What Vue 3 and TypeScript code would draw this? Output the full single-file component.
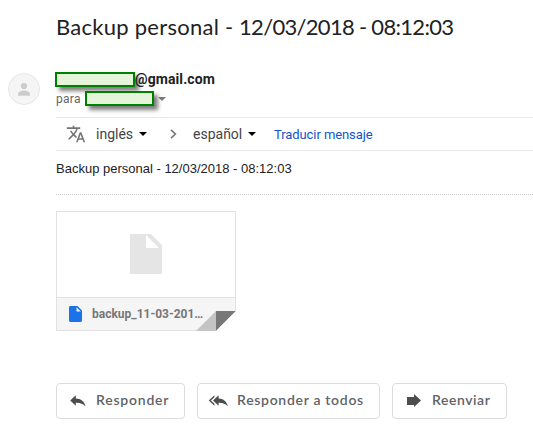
<script setup lang="ts">
interface Action {
  id: string
  label: string
  icon: string
}

const title = 'Backup personal -'
const stamp = '12/03/2018 - 08:12:03'
const actions: Action[] = [
  { id: 'reply', label: 'Responder', icon: 'M6.8 2.2V5.4C12 5.6 15.4 8.2 16.6 13.6C14.2 10.6 11.2 9.6 6.8 9.7V12.8L1.2 7.5Z' },
  { id: 'all', label: 'Responder a todos', icon: 'M10.6 2.2V5.4C15.4 5.6 18.8 8.2 20 13.6C17.6 10.6 14.8 9.6 10.6 9.7V12.8L5 7.5ZM6.4 2.2V4.2L2.9 7.5L6.4 10.8V12.8L.8 7.5Z' },
  { id: 'forward', label: 'Reenviar', icon: 'M1 4H8V1L15 7.5L8 14V12H1Z' },
]
</script>

<template>
  <main class="mail">
    <h1 class="subject"><span class="title">{{ title }}</span> <span class="stamp">{{ stamp }}</span></h1>
    <header class="sender">
      <svg class="avatar" viewBox="0 0 32 32">
        <circle cx="16" cy="16" r="15.5" fill="#f5f5f5" stroke="#e6e6e6" />
        <circle cx="16" cy="13" r="3.1" fill="#ccc" />
        <path d="M10 22.8V20.8C10 18.5 14 17.5 16 17.5S22 18.5 22 20.8V22.8Z" fill="#ccc" />
      </svg>
      <div class="people">
        <div class="from"><span class="mask mask-from"></span><b class="domain">@gmail.com</b></div>
        <div class="to">
          <span class="para">para</span><span class="mask mask-to"></span>
          <svg class="to-arrow" viewBox="0 0 8 4"><path d="M0 0H8L4 4Z" fill="#777" /></svg>
        </div>
      </div>
    </header>
    <section class="content">
      <div class="translate">
        <svg class="glyph" viewBox="0 0 24 24"><path fill="#757575" d="M12.87 15.07l-2.54-2.51.03-.03A17.52 17.52 0 0014.07 6H17V4h-7V2H8v2H1v2h11.17C11.5 7.92 10.44 9.75 9 11.35 8.07 10.32 7.3 9.19 6.69 8h-2c.73 1.63 1.73 3.17 2.98 4.56l-5.09 5.02L4 19l5-5 3.11 3.11.76-2.04zM18.5 10h-2L12 22h2l1.12-3h4.75L21 22h2l-4.5-12zm-2.62 7l1.62-4.33L19.12 17h-3.24z" /></svg>
        <span class="lang source">inglés</span>
        <svg class="caret" viewBox="0 0 8 4"><path d="M0 0H8L4 4Z" /></svg>
        <svg class="chevron" viewBox="0 0 7 10"><path d="M1 .8L5.4 5L1 9.2" fill="none" stroke="#777" stroke-width="1.6" /></svg>
        <span class="lang target">español</span>
        <svg class="caret" viewBox="0 0 8 4"><path d="M0 0H8L4 4Z" /></svg>
        <a class="link">Traducir mensaje</a>
      </div>
      <p class="body">{{ title }} {{ stamp }}</p>
      <div class="divider"></div>
      <article class="file">
        <div class="preview">
          <svg class="big-doc" viewBox="0 0 32 40"><path fill="#e5e5e5" fill-rule="evenodd" d="M0 0H21L32 11V40H0ZM16 1V14H29Z" /></svg>
        </div>
        <div class="caption">
          <svg class="doc" viewBox="0 0 13 16"><path fill="#1a73e8" fill-rule="evenodd" d="M1.4 0H8.5L13 4.5V14.6Q13 16 11.6 16H1.4Q0 16 0 14.6V1.4Q0 0 1.4 0ZM7.5 1.2V5.5H11.8Z" /></svg>
          <span class="name">backup_11-03-201…</span>
        </div>
        <svg class="fold" viewBox="0 0 40 20"><path d="M0 20L20 0V20Z" fill="#c4c4c4" /><path d="M20 0H40L20 20Z" fill="#777" /><path d="M40 0V20H20Z" fill="#fff" /></svg>
      </article>
      <nav class="actions">
        <button v-for="action in actions" :key="action.id" class="action" :class="action.id">
          <svg class="action-icon" viewBox="0 0 21 16"><path :d="action.icon" fill="#4d4d4d" /></svg>
          <span class="label">{{ action.label }}</span>
        </button>
      </nav>
    </section>
  </main>
</template>

<style>
body { margin: 0; background: #fff; overflow: hidden; }
</style>

<style scoped>
* { box-sizing: border-box; }
svg { display: block; flex: none; }
.mail { width: 533px; height: 439px; overflow: hidden; background: #fff; font-family: Roboto, "Liberation Sans", sans-serif; color: #202124; }
.subject { margin: 0; padding: 13px 0 0 56px; height: 71px; font: 400 22px/28px Lato, sans-serif; white-space: nowrap; }
.title { letter-spacing: .26px; }
.stamp { letter-spacing: -.7px; }
.sender { display: flex; height: 46px; padding-left: 8px; }
.avatar { width: 32px; height: 32px; margin-top: 2px; }
.people { margin-left: 15px; }
.from { display: flex; height: 20px; padding-top: 1px; }
.mask { flex: none; height: 15px; border: 2px solid #008000; background: #e5f5d9; box-shadow: 4px 4px 4px rgba(0, 0, 0, .5); }
.mask-from { width: 80px; }
.domain { margin-top: -1px; font-size: 14px; line-height: 16px; letter-spacing: .1px; }
.to { display: flex; height: 16px; }
.para { width: 29px; margin-left: 1px; font-size: 12px; line-height: 16px; color: #666; letter-spacing: .3px; }
.mask-to { width: 69px; }
.to-arrow { width: 8px; height: 4px; margin: 6px 0 0 4px; }
.content { margin-left: 56px; }
.translate { display: flex; align-items: center; height: 34px; border-top: 1px solid #e8e8e8; border-bottom: 1px solid #e8e8e8; padding-left: 10px; }
.glyph { width: 20px; height: 20px; }
.lang { font-size: 14px; line-height: 18px; color: #444; white-space: nowrap; }
.source { width: 37px; margin-left: 10px; }
.caret { width: 8px; height: 4px; margin-left: 6px; }
.chevron { width: 7px; height: 10px; margin-left: 23px; }
.target { width: 49px; margin-left: 16px; }
.link { margin-left: 18px; padding-top: 1px; color: #15c; font-size: 13px; line-height: 18px; letter-spacing: -.08px; white-space: nowrap; }
.body { margin: 0; padding-top: 9px; height: 43px; font: 13px/18px "Liberation Sans", sans-serif; }
.divider { border-top: 1px dotted #ccc; }
.file { position: relative; width: 180px; height: 120px; margin-top: 16px; border: 1px solid #e2e2e2; }
.preview { display: flex; justify-content: center; height: 85px; padding-top: 22px; }
.big-doc { width: 32px; height: 40px; }
.caption { display: flex; align-items: center; height: 33px; border-top: 1px solid #e2e2e2; background: #f5f5f5; padding-left: 12px; }
.doc { width: 13px; height: 16px; }
.name { margin-left: 10px; font-size: 12px; line-height: 16px; font-weight: 700; color: #777; white-space: nowrap; }
.fold { position: absolute; width: 40px; height: 20px; right: -1px; bottom: -1px; }
.actions { display: flex; gap: 12px; margin-top: 52px; }
.action { display: flex; align-items: center; height: 36px; padding: 0 0 0 12px; border: 1px solid #dadce0; border-radius: 4px; background: #fff; }
.reply { width: 129px; }
.all { width: 183px; padding-left: 10px; }
.forward { width: 115px; padding-left: 13px; }
.action-icon { width: 21px; height: 16px; }
.label { margin: -2px 0 0 6px; color: #5f6368; font: 600 14px/20px Lato, sans-serif; letter-spacing: .78px; white-space: nowrap; }
.all .label { margin-left: 8px; letter-spacing: .7px; }
.forward .label { margin-left: 5px; letter-spacing: .55px; }
</style>
